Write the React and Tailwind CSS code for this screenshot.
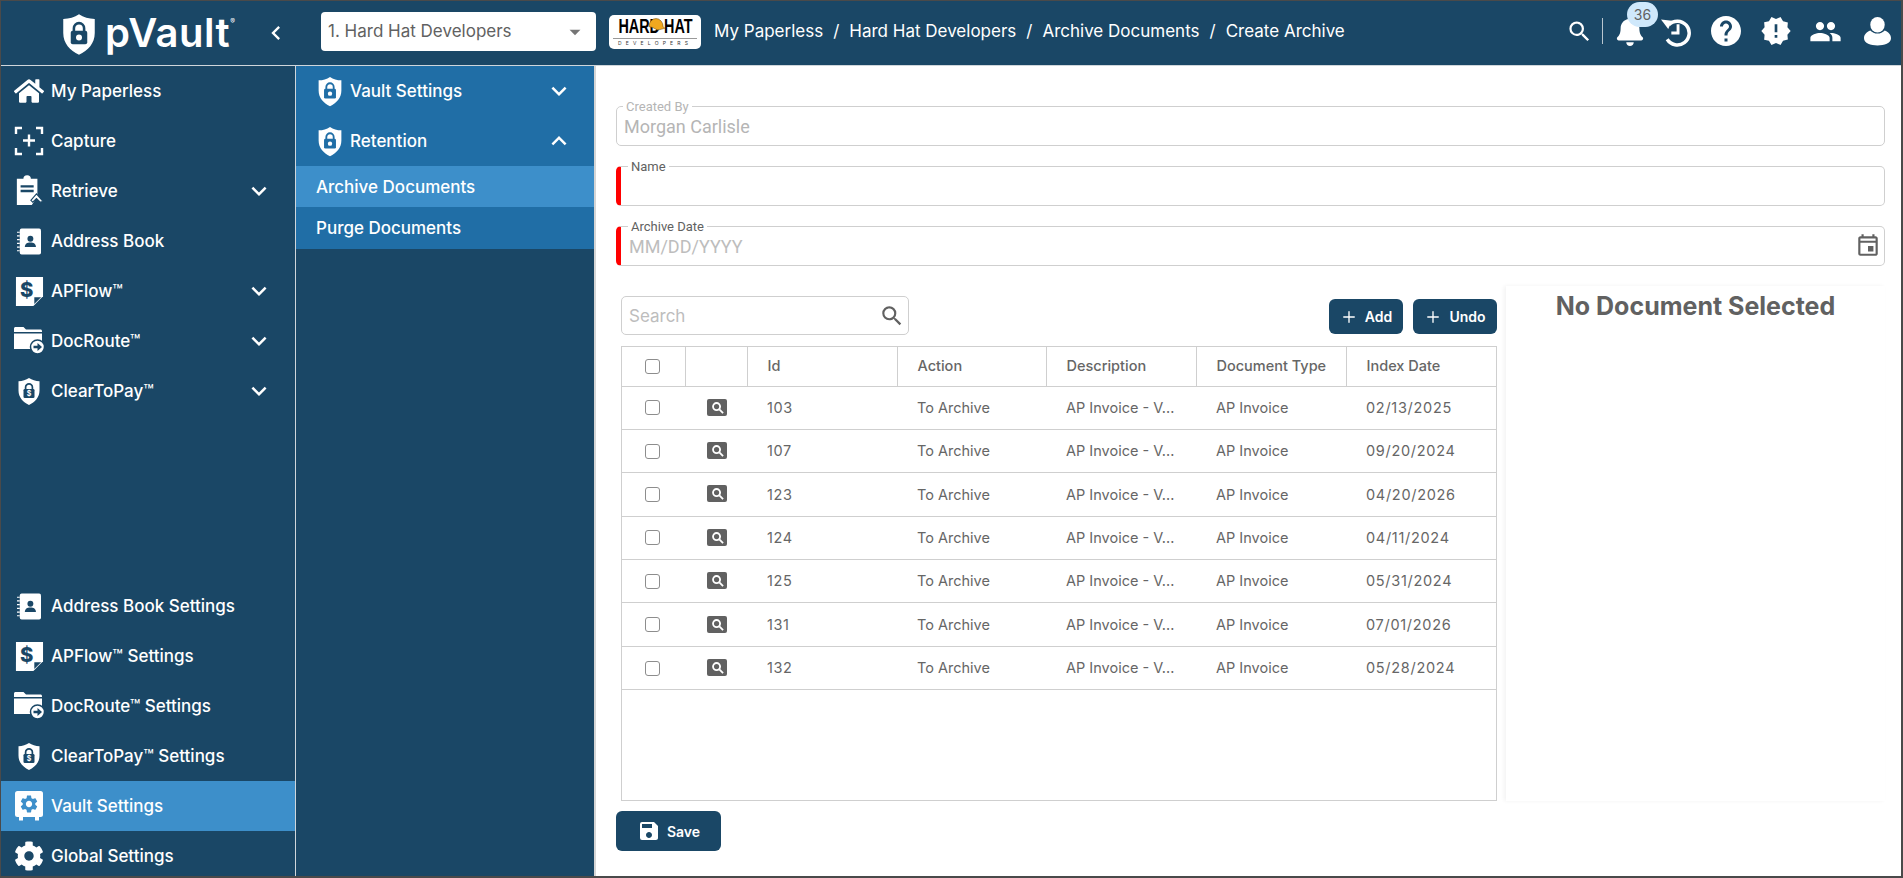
import React from "react";
import { FaHome, FaCog, FaBell } from "react-icons/fa";
import { MdHelp, MdNewReleases, MdPeople, MdOutlineEvent, MdSave, MdSearch, MdKeyboardArrowDown, MdKeyboardArrowUp, MdChevronLeft, MdArrowDropDown } from "react-icons/md";
import { Plus } from "lucide-react";

const NAVY = "#1a4766";

// shield with padlock, used for logo + vault menu items
const ShieldLock = ({ className, bg = NAVY, dollar = false }) => (
  <svg viewBox="0 0 24 28" className={className}>
    <path d="M12 .5c3 2 6.500 3 10.500 3.200V13c0 7-4.500 11.500-10.500 14.500C6 24.500 1.500 20 1.500 13V3.700C5.500 3.500 9 2.500 12 .5z" fill="#fff" />
    <path d="M8.600 12V9.800a3.400 3.400 0 0 1 6.800 0V12" fill="none" stroke={bg} strokeWidth="1.700" />
    <rect x="6.500" y="11.500" width="11" height="9" rx="1.300" fill={bg} />
    {dollar ? (
      <text x="12" y="18.800" textAnchor="middle" fontSize="7" fontWeight="700" fill="#fff" fontFamily="Inter, sans-serif">$</text>
    ) : (
      <circle cx="12" cy="16" r="2" fill="#fff" />
    )}
  </svg>
);

const CaptureIcon = ({ className }) => (
  <svg viewBox="0 0 30 30" className={className} fill="none" stroke="#fff" strokeWidth="2.400">
    <path d="M8 2H2v6M22 2h6v6M8 28H2v-6M22 28h6v-6" />
    <path d="M15 8.500v12M9 14.500h12" />
  </svg>
);

const RetrieveIcon = ({ className }) => (
  <svg viewBox="0 0 30 34" className={className}>
    <path d="M2 4h7a4 4 0 0 1 8 0h7v19l-6 9H2z" fill="#fff" />
    <path d="M6 12h14M6 17h14" stroke={NAVY} strokeWidth="2.500" />
    <path d="M17 27l6-7 7 8-3 1-4-4-4 4z" fill="#fff" stroke={NAVY} strokeWidth="1.200" />
  </svg>
);

const BookIcon = ({ className }) => (
  <svg viewBox="0 0 26 28" className={className}>
    <rect x="3" y="0" width="23" height="28" rx="2" fill="#fff" />
    <path d="M0 4h3M0 8h3M0 12h3M0 16h3M0 20h3M0 24h3" stroke="#fff" strokeWidth="1.300" />
    <circle cx="14.500" cy="11" r="3.200" fill={NAVY} />
    <path d="M8.500 20c0-3.500 2.500-5 6-5s6 1.500 6 5z" fill={NAVY} />
  </svg>
);

const FlowIcon = ({ className }) => (
  <svg viewBox="0 0 30 32" className={className}>
    <path d="M1 1h28v20L19 31H1z" fill="#fff" />
    <text x="12" y="22" textAnchor="middle" fontSize="21" fontWeight="800" fill={NAVY} fontFamily="Inter, sans-serif">$</text>
    <path d="M27 22h-7v7z" fill={NAVY} />
  </svg>
);

const FolderIcon = ({ className }) => (
  <svg viewBox="0 0 31 28" className={className}>
    <path d="M0 1.500C0 .7.700 0 1.500 0h8L12 2.500h14.500c.8 0 1.500.7 1.500 1.500v1H0z" fill="#fff" />
    <path d="M0 6.500h28V22H0z" fill="#fff" />
    <circle cx="23.500" cy="20" r="7" fill="#fff" stroke={NAVY} strokeWidth="1.500" />
    <path d="M19.500 18.700h4v-2.700l4.500 4-4.500 4v-2.700h-4z" fill={NAVY} />
  </svg>
);

const VaultIcon = ({ className }) => (
  <svg viewBox="0 0 28 30" className={className}>
    <rect x="0" y="0" width="28" height="26" rx="2.500" fill="#fff" />
    <path d="M4 26h4v3.500H4zM20 26h4v3.500h-4z" fill="#fff" />
    <g transform="translate(3.500 2.500) scale(.875)" fill="#3d8fca">
      <path d="M19.140 12.940c.04-.3.06-.61.06-.94 0-.32-.02-.64-.07-.94l2.030-1.580c.18-.14.23-.41.12-.61l-1.920-3.320c-.12-.22-.37-.29-.59-.22l-2.390.96c-.5-.38-1.030-.7-1.620-.94l-.36-2.540c-.04-.24-.24-.41-.48-.41h-3.840c-.24 0-.43.17-.47.41l-.36 2.540c-.59.24-1.130.57-1.620.94l-2.390-.96c-.22-.08-.47 0-.59.22L2.740 8.870c-.12.21-.08.47.12.61l2.030 1.580c-.05.3-.09.63-.09.94s.02.64.07.94l-2.030 1.580c-.18.14-.23.41-.12.61l1.920 3.320c.12.22.37.29.59.22l2.390-.96c.5.38 1.030.7 1.620.94l.36 2.540c.05.24.24.41.48.41h3.840c.24 0 .44-.17.47-.41l.36-2.540c.59-.24 1.130-.56 1.620-.94l2.390.96c.22.08.47 0 .59-.22l1.920-3.320c.12-.22.07-.47-.12-.61l-2.010-1.580zM12 15.600c-1.980 0-3.600-1.620-3.600-3.600s1.620-3.600 3.600-3.600 3.600 1.620 3.600 3.600-1.620 3.600-3.600 3.600z" />
    </g>
  </svg>
);

const UserIcon = ({ className }) => (
  <svg viewBox="0 0 28 30" className={className} fill="#fff">
    <ellipse cx="14" cy="8.500" rx="7.500" ry="8" />
    <path d="M6.500 14.500c2 2 4.500 3.200 7.500 3.200s5.500-1.200 7.500-3.200c3.500 1.500 6.500 4 6.500 8C28 27.500 21 30 14 30S0 27.500 0 22.500c0-4 3-6.500 6.500-8z" />
  </svg>
);

// history: arc runs clockwise from the arrow, hands go down then left
const HistoryIcon = ({ className }) => (
  <svg viewBox="0 0 30 30" className={className}>
    <path d="M7.500 8.500A11.500 11.500 0 1 1 6 22.500" fill="none" stroke="#fff" strokeWidth="3.400" />
    <path d="M0 3.500l10.500 1-3.500 8z" fill="#fff" />
    <path d="M16.500 8v8.500H10" fill="none" stroke="#fff" strokeWidth="2.800" />
  </svg>
);

const topNav = [
  { label: "My Paperless", icon: <FaHome className="w-[30px] h-[30px] text-white" /> },
  { label: "Capture", icon: <CaptureIcon className="w-[30px] h-[30px]" /> },
  { label: "Retrieve", icon: <RetrieveIcon className="w-[28px] h-[34px]" />, arrow: true },
  { label: "Address Book", icon: <BookIcon className="w-[24px] h-[27px]" /> },
  { label: "APFlow™", icon: <FlowIcon className="w-[29px] h-[31px]" />, arrow: true },
  { label: "DocRoute™", icon: <FolderIcon className="w-[31px] h-[28px]" />, arrow: true },
  { label: "ClearToPay™", icon: <ShieldLock dollar className="w-[24px] h-[29px]" />, arrow: true },
];

const bottomNav = [
  { label: "Address Book Settings", icon: <BookIcon className="w-[24px] h-[27px]" /> },
  { label: "APFlow™ Settings", icon: <FlowIcon className="w-[29px] h-[31px]" /> },
  { label: "DocRoute™ Settings", icon: <FolderIcon className="w-[31px] h-[28px]" /> },
  { label: "ClearToPay™ Settings", icon: <ShieldLock dollar className="w-[24px] h-[29px]" /> },
  { label: "Vault Settings", icon: <VaultIcon className="w-[28px] h-[30px]" />, active: true },
  { label: "Global Settings", icon: <FaCog className="w-[30px] h-[30px] text-white" /> },
];

const rows = [
  ["103", "02/13/2025"],
  ["107", "09/20/2024"],
  ["123", "04/20/2026"],
  ["124", "04/11/2024"],
  ["125", "05/31/2024"],
  ["131", "07/01/2026"],
  ["132", "05/28/2024"],
];

const columns = ["Id", "Action", "Description", "Document Type", "Index Date"];

function NavItem({ item }) {
  return (
    <div className={`h-[50px] shrink-0 flex items-center text-white text-[17px] font-medium ${item.active ? "bg-[#3d8fca]" : ""}`}>
      <span className="w-[50px] pl-[6px] shrink-0 flex justify-center">{item.icon}</span>
      <span className="flex-1 pt-[2px] whitespace-nowrap">{item.label}</span>
      {item.arrow && <MdKeyboardArrowDown className="w-[30px] h-[30px] mr-[21px] text-white" />}
    </div>
  );
}

function Field({ label, required, disabled, children }) {
  return (
    <fieldset className={`h-[45px] rounded-[5px] border border-[#cfcfcf] font-['Roboto',sans-serif] ${required ? "border-l-[5px] border-l-[#f00] pl-[8px]" : "pl-[7px]"}`}>
      <legend className={`text-[13px] leading-[11px] h-[11px] px-[3px] ${required ? "-ml-[1px] text-[#616161]" : "-ml-[1px] text-[#b5b5b5]"}`}>{label}</legend>
      <div className={`flex items-center justify-between h-[26px] pt-[3px] text-[18px] pr-[10px] ${disabled ? "text-[#b5b5b5]" : "text-[#bdbdbd]"}`}>{children}</div>
    </fieldset>
  );
}

function ActionButton({ label, className }) {
  return (
    <button className={`h-[35px] rounded-[6px] bg-[#1a4766] text-white text-[14px] font-semibold flex items-center justify-center gap-[7px] ${className}`}>
      <Plus className="w-[18px] h-[18px]" strokeWidth={1.8} />
      {label}
    </button>
  );
}

const RowIcon = () => (
  <span className="w-[20px] h-[17px] -mt-[1px] rounded-[2px] bg-[#616161] flex items-center justify-center">
    <svg viewBox="0 0 14 14" className="w-[13px] h-[13px]" fill="none" stroke="#fff" strokeWidth="2">
      <circle cx="6" cy="6" r="3.800" />
      <path d="M9 9l4 4" />
    </svg>
  </span>
);

const Check = () => <span className="block w-[15px] h-[15px] rounded-[3px] border-[1.500px] border-[#8d8d8d] bg-white" />;

export default function App() {
  return (
    <div className="w-[1903px] h-[878px] overflow-hidden flex flex-col border border-[#4a4a4a] border-r-2 border-b-2 bg-white font-['Inter',sans-serif]">
      {/* header */}
      <header className="h-[65px] shrink-0 flex items-center bg-[#1a4766] border-b border-[#cfd6db]">
        <div className="w-[320px] shrink-0 flex items-center">
          <ShieldLock className="ml-[60px] w-[36px] h-[43px] mt-[2px]" />
          <span className="ml-[8px] text-white text-[40px] leading-none font-semibold tracking-[.5px]">pVault</span>
          <span className="text-white text-[7px] mb-[22px]">®</span>
          <MdChevronLeft className="w-[28px] h-[28px] text-white ml-[27px] -mt-[1px]" />
        </div>
        <div className="w-[275px] h-[39px] -mt-[3px] rounded-[4px] bg-white flex items-center justify-between pl-[7px] pr-[8px] text-[17px] text-[#616161]">
          <span>1. Hard Hat Developers</span>
          <MdArrowDropDown className="w-[26px] h-[26px] text-[#757575]" />
        </div>
        <div className="ml-[13px] w-[92px] h-[34px] -mt-[3px] rounded-[5px] bg-white flex flex-col items-center relative overflow-hidden">
          <span className="font-['Liberation_Sans',sans-serif] font-bold text-black text-[20px] leading-[23px] whitespace-nowrap scale-x-[.72]">HARD HAT</span>
          <svg viewBox="0 0 20 18" className="absolute left-[38px] top-0 w-[18px] h-[16px]">
            <path d="M2 13a8 9 0 0 1 16 0l2 2-8 2-6-3z" fill="#f0a820" stroke="#6b4a10" strokeWidth=".6" />
          </svg>
          <span className="w-[84px] border-t border-[#999] text-[5px] leading-[8px] tracking-[4.200px] text-[#333] text-center whitespace-nowrap overflow-hidden">DEVELOPERS</span>
        </div>
        <nav className="ml-[13px] -mt-[3px] text-white text-[17px] whitespace-nowrap flex gap-[10px]">
          <span>My Paperless</span><span>/</span><span>Hard Hat Developers</span><span>/</span><span>Archive Documents</span><span>/</span><span>Create Archive</span>
        </nav>
        <div className="ml-auto pr-[10px] flex items-center text-white -mt-[4px]">
          <MdSearch className="w-[27px] h-[27px]" />
          <span className="w-px h-[26px] bg-[#b9c6cf] ml-[9px] mr-[12px]" />
          <span className="relative w-[30px] h-[30px] mr-[16px]">
            <FaBell className="w-[30px] h-[30px]" />
            <span className="absolute left-[12px] -top-[14px] w-[31px] h-[25px] rounded-full bg-[#cfe8fb] text-[#616161] text-[14px] flex items-center justify-center">36</span>
          </span>
          <HistoryIcon className="w-[31px] h-[31px] mr-[16px]" />
          <MdHelp className="w-[36px] h-[36px] mr-[16px]" />
          <MdNewReleases className="w-[32px] h-[32px] mr-[17px]" />
          <MdPeople className="w-[33px] h-[33px] mr-[22px]" />
          <UserIcon className="w-[27px] h-[30px]" />
        </div>
      </header>

      <div className="flex-1 min-h-0 flex">
        {/* main sidebar */}
        <aside className="w-[295px] shrink-0 bg-[#1a4766] border-r border-[#cfd6db] flex flex-col justify-between">
          <div>{topNav.map((n) => <NavItem key={n.label} item={n} />)}</div>
          <div className="-mb-[5px]">{bottomNav.map((n) => <NavItem key={n.label} item={n} />)}</div>
        </aside>

        {/* sub menu */}
        <aside className="w-[300px] shrink-0 bg-[#1a4766] border-r-[2px] border-[#d5d5d5]">
          <div className="bg-[#206ea6] text-white text-[17px] font-medium">
            {["Vault Settings", "Retention"].map((t, i) => (
              <div key={t} className="h-[50px] flex items-center">
                <ShieldLock bg="#206ea6" className="ml-[21px] w-[26px] h-[31px]" />
                <span className="ml-[7px] pt-[2px] flex-1">{t}</span>
                {i === 0 ? <MdKeyboardArrowDown className="w-[30px] h-[30px] mr-[20px]" /> : <MdKeyboardArrowUp className="w-[30px] h-[30px] mr-[20px]" />}
              </div>
            ))}
            <div className="h-[41px] flex items-center bg-[#3d8fca] pl-[20px] pt-[2px]">Archive Documents</div>
            <div className="h-[42px] flex items-center pl-[20px] pt-[2px]">Purge Documents</div>
          </div>
        </aside>

        {/* content */}
        <main className="flex-1 min-w-0 pl-[20px] pr-[16px] pt-[35px] bg-white flex flex-col">
          <div className="flex flex-col gap-[15px]">
            <Field label="Created By" disabled>Morgan Carlisle</Field>
            <Field label="Name" required />
            <Field label="Archive Date" required>
              MM/DD/YYYY
              <MdOutlineEvent className="w-[26px] h-[26px] -mr-[7px] -mt-[3px] text-[#616161]" />
            </Field>
          </div>

          <div className="flex mt-[20px]">
            <div className="w-[881px] shrink-0 pl-[5px]">
              <div className="h-[39px] mt-[10px] flex items-start justify-between">
                <div className="w-[288px] h-[39px] rounded-[5px] border border-[#cfcfcf] flex items-center justify-between pl-[7px] pr-[3px] text-[17px] text-[#bdbdbd]">
                  <span className="pt-[3px]">Search</span>
                  <MdSearch className="w-[26px] h-[26px] text-[#616161]" />
                </div>
                <div className="flex gap-[10px] mt-[3px]">
                  <ActionButton label="Add" className="w-[74px]" />
                  <ActionButton label="Undo" className="w-[84px]" />
                </div>
              </div>
              <div className="mt-[11px] h-[455px] border border-[#cfcfcf] overflow-hidden">
                <table className="table-fixed w-full border-collapse text-[14.500px] text-[#666]">
                  <colgroup>
                    <col className="w-[63px]" />
                    <col className="w-[62px]" />
                    <col className="w-[150px]" />
                    <col className="w-[149px]" />
                    <col className="w-[150px]" />
                    <col className="w-[150px]" />
                    <col />
                  </colgroup>
                  <thead>
                    <tr className="h-[39px] border-b border-[#cfcfcf]">
                      <th className="border-r border-[#cfcfcf] pl-[23px]"><Check /></th>
                      <th className="border-r border-[#cfcfcf]" />
                      {columns.map((c, i) => (
                        <th key={c} className={`pl-[20px] text-left font-medium ${i < columns.length - 1 ? "border-r border-[#cfcfcf]" : ""}`}>{c}</th>
                      ))}
                    </tr>
                  </thead>
                  <tbody>
                    {rows.map(([id, date]) => (
                      <tr key={id} className="h-[43.400px] border-b border-[#cfcfcf]">
                        <td className="pl-[23px]"><Check /></td>
                        <td className="pl-[22px]"><RowIcon /></td>
                        <td className="pl-[20px] tracking-[.6px]">{id}</td>
                        <td className="pl-[20px]">To Archive</td>
                        <td className="pl-[20px] whitespace-nowrap">AP Invoice - V...</td>
                        <td className="pl-[20px]">AP Invoice</td>
                        <td className="pl-[20px] tracking-[.7px]">{date}</td>
                      </tr>
                    ))}
                  </tbody>
                </table>
              </div>
            </div>
            <section className="ml-[9px] flex-1 h-[515px] bg-white shadow-[-2px_0_4px_rgba(0,0,0,0.05)] pt-[2px] text-center text-[25px] font-bold text-[#616161]">
              No Document Selected
            </section>
          </div>

          <button className="mt-[10px] w-[105px] h-[40px] rounded-[6px] bg-[#1a4766] text-white text-[14px] font-semibold flex items-center justify-center gap-[6px]">
            <MdSave className="w-[24px] h-[24px]" />
            Save
          </button>
        </main>
      </div>
    </div>
  );
}
